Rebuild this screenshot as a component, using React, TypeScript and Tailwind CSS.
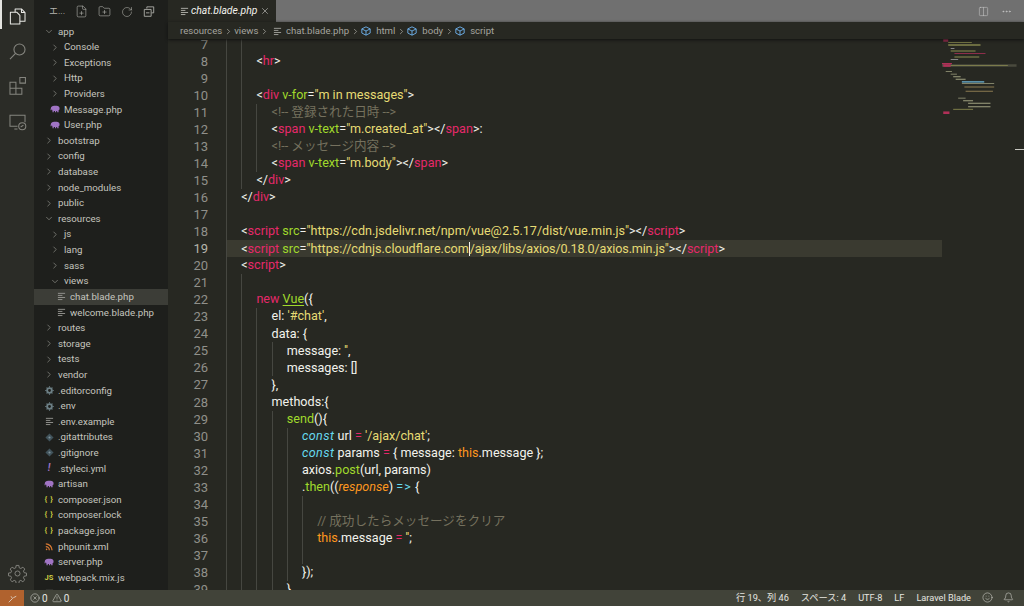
import { Bell, ChevronDown, ChevronRight, Columns2, Ellipsis, FilePlus, FolderPlus, RotateCw, Smile, TriangleAlert, X, CircleX } from "lucide-react";

const sans = "font-['Roboto','Noto_Sans_CJK_JP',sans-serif]";

type Kind = "t" | "p" | "a" | "s" | "n" | "c" | "k" | "o" | "g" | "i" | "u";
type Tok = [Kind, string];

const tokClass: Record<Kind, string> = {
  t: "text-[#f2f2ec]",
  p: "text-[#e5286a]",
  a: "text-[#a0d92c]",
  s: "text-[#e6db74]",
  n: "text-[#e6db74] tracking-[-0.15px]",
  c: "text-[#75715e]",
  k: "text-[#66d9ef] italic tracking-[0.4px]",
  o: "text-[#fd971f]",
  g: "text-[#fd971f] italic",
  i: "text-[#66d9ef] tracking-[1px]",
  u: "text-[#a0d92c] underline underline-offset-2",
};

const lines: { n: number; level: number; toks: Tok[] }[] = [
  { n: 7, level: 2, toks: [] },
  { n: 8, level: 2, toks: [["t", "<"], ["p", "hr"], ["t", ">"]] },
  { n: 9, level: 2, toks: [] },
  { n: 10, level: 2, toks: [["t", "<"], ["p", "div"], ["t", " "], ["a", "v-for"], ["t", "="], ["s", '"m in messages"'], ["t", ">"]] },
  { n: 11, level: 3, toks: [["c", "<!-- 登録された日時 -->"]] },
  { n: 12, level: 3, toks: [["t", "<"], ["p", "span"], ["t", " "], ["a", "v-text"], ["t", "="], ["s", '"m.created_at"'], ["t", "></"], ["p", "span"], ["t", ">:"]] },
  { n: 13, level: 3, toks: [["c", "<!-- メッセージ内容 -->"]] },
  { n: 14, level: 3, toks: [["t", "<"], ["p", "span"], ["t", " "], ["a", "v-text"], ["t", "="], ["s", '"m.body"'], ["t", "></"], ["p", "span"], ["t", ">"]] },
  { n: 15, level: 2, toks: [["t", "</"], ["p", "div"], ["t", ">"]] },
  { n: 16, level: 1, toks: [["t", "</"], ["p", "div"], ["t", ">"]] },
  { n: 17, level: 1, toks: [] },
  { n: 18, level: 1, toks: [["t", "<"], ["p", "script"], ["t", " "], ["a", "src"], ["t", "="], ["s", '"https://cdn.jsdelivr.net/npm/vue@2.5.17/dist/vue.min.js"'], ["t", "></"], ["p", "script"], ["t", ">"]] },
  { n: 19, level: 1, toks: [["t", "<"], ["p", "script"], ["t", " "], ["a", "src"], ["t", "="], ["s", '"https://cdnjs.cloudflare.com'], ["n", '/ajax/libs/axios/0.18.0/axios.min.js"'], ["t", "></"], ["p", "script"], ["t", ">"]] },
  { n: 20, level: 1, toks: [["t", "<"], ["p", "script"], ["t", ">"]] },
  { n: 21, level: 2, toks: [] },
  { n: 22, level: 2, toks: [["p", "new "], ["u", "Vue"], ["t", "({"]] },
  { n: 23, level: 3, toks: [["t", "el: "], ["s", "'#chat'"], ["t", ","]] },
  { n: 24, level: 3, toks: [["t", "data: {"]] },
  { n: 25, level: 4, toks: [["t", "message: "], ["s", "''"], ["t", ","]] },
  { n: 26, level: 4, toks: [["t", "messages: []"]] },
  { n: 27, level: 3, toks: [["t", "},"]] },
  { n: 28, level: 3, toks: [["t", "methods:{"]] },
  { n: 29, level: 4, toks: [["a", "send"], ["t", "(){"]] },
  { n: 30, level: 5, toks: [["k", "const"], ["t", " url "], ["p", "="], ["t", " "], ["s", "'/ajax/chat'"], ["t", ";"]] },
  { n: 31, level: 5, toks: [["k", "const"], ["t", " params "], ["p", "="], ["t", " { message: "], ["o", "this"], ["t", ".message };"]] },
  { n: 32, level: 5, toks: [["t", "axios."], ["a", "post"], ["t", "(url, params)"]] },
  { n: 33, level: 5, toks: [["t", "."], ["a", "then"], ["t", "(("], ["g", "response"], ["t", ") "], ["i", "=>"], ["t", " {"]] },
  { n: 34, level: 6, toks: [] },
  { n: 35, level: 6, toks: [["c", "// 成功したらメッセージをクリア"]] },
  { n: 36, level: 6, toks: [["o", "this"], ["t", ".message "], ["p", "="], ["t", " "], ["s", "''"], ["t", ";"]] },
  { n: 37, level: 6, toks: [] },
  { n: 38, level: 5, toks: [["t", "});"]] },
  { n: 39, level: 4, toks: [["t", "}"]] },
];

type Row = { name: string; depth: number; icon: "open" | "closed" | "php" | "gear" | "lines" | "git" | "yml" | "json" | "rss" | "js" | "none"; selected?: boolean };

const rows: Row[] = [
  { name: "app", depth: 0, icon: "open" },
  { name: "Console", depth: 1, icon: "closed" },
  { name: "Exceptions", depth: 1, icon: "closed" },
  { name: "Http", depth: 1, icon: "closed" },
  { name: "Providers", depth: 1, icon: "closed" },
  { name: "Message.php", depth: 1, icon: "php" },
  { name: "User.php", depth: 1, icon: "php" },
  { name: "bootstrap", depth: 0, icon: "closed" },
  { name: "config", depth: 0, icon: "closed" },
  { name: "database", depth: 0, icon: "closed" },
  { name: "node_modules", depth: 0, icon: "closed" },
  { name: "public", depth: 0, icon: "closed" },
  { name: "resources", depth: 0, icon: "open" },
  { name: "js", depth: 1, icon: "closed" },
  { name: "lang", depth: 1, icon: "closed" },
  { name: "sass", depth: 1, icon: "closed" },
  { name: "views", depth: 1, icon: "open" },
  { name: "chat.blade.php", depth: 2, icon: "lines", selected: true },
  { name: "welcome.blade.php", depth: 2, icon: "lines" },
  { name: "routes", depth: 0, icon: "closed" },
  { name: "storage", depth: 0, icon: "closed" },
  { name: "tests", depth: 0, icon: "closed" },
  { name: "vendor", depth: 0, icon: "closed" },
  { name: ".editorconfig", depth: 0, icon: "gear" },
  { name: ".env", depth: 0, icon: "gear" },
  { name: ".env.example", depth: 0, icon: "lines" },
  { name: ".gitattributes", depth: 0, icon: "git" },
  { name: ".gitignore", depth: 0, icon: "git" },
  { name: ".styleci.yml", depth: 0, icon: "yml" },
  { name: "artisan", depth: 0, icon: "php" },
  { name: "composer.json", depth: 0, icon: "json" },
  { name: "composer.lock", depth: 0, icon: "json" },
  { name: "package.json", depth: 0, icon: "json" },
  { name: "phpunit.xml", depth: 0, icon: "rss" },
  { name: "server.php", depth: 0, icon: "php" },
  { name: "webpack.mix.js", depth: 0, icon: "js" },
  { name: "yarn.lock", depth: 0, icon: "lines" },
];

function LinesIcon({ className = "" }: { className?: string }) {
  return (
    <svg viewBox="0 0 10 10" className={`w-[9px] h-[9px] ${className}`} fill="none" stroke="currentColor" strokeWidth="1">
      <path d="M1 1.5h8M1 3.8h5M1 6.1h8M1 8.4h5" />
    </svg>
  );
}

function PhpIcon() {
  return (
    <svg viewBox="0 0 12 9" className="w-[10px] h-[8px] text-[#a074c4]" fill="currentColor">
      <path d="M1 3.5C1 1.5 3 .5 5 .5h3c2 0 3.5 1.2 3.5 3.4 0 1.2-.5 2-1.2 2.2V8.5H8.6V6.8H7.4v1.7H6V6.8H4.5v1.7H3V6.5C2.6 6 2.4 5.4 2.4 4.4L1.6 6H.6z" />
    </svg>
  );
}

function GearIcon() {
  return (
    <svg viewBox="0 0 10 10" className="w-[9px] h-[9px] text-[#6d8086]" fill="none" stroke="currentColor">
      <circle cx="5" cy="5" r="2.6" strokeWidth="2" />
      <path d="M5 .3v1.4M5 8.3v1.4M.3 5h1.4M8.3 5h1.4M1.7 1.7l1 1M7.3 7.3l1 1M8.3 1.7l-1 1M2.7 7.3l-1 1" strokeWidth="1.2" />
    </svg>
  );
}

function RowIcon({ icon }: { icon: Row["icon"] }) {
  if (icon === "open") return <ChevronDown className="w-[11px] h-[11px] text-[#b0b0aa]" strokeWidth={1.3} />;
  if (icon === "closed") return <ChevronRight className="w-[11px] h-[11px] text-[#b0b0aa]" strokeWidth={1.3} />;
  if (icon === "php") return <PhpIcon />;
  if (icon === "gear") return <GearIcon />;
  if (icon === "lines") return <LinesIcon className="text-[#9a9a95]" />;
  if (icon === "git") return <svg viewBox="0 0 10 10" className="w-[9px] h-[9px]"><path d="M5 .5 9.5 5 5 9.5.5 5z" fill="#41535b" /><circle cx="5" cy="5" r="1.2" fill="#7f939b" /></svg>;
  if (icon === "yml") return <span className="text-[#a074c4] text-[10px] leading-none italic font-bold">!</span>;
  if (icon === "json") return <span className="text-[#cbcb41] text-[8px] leading-none font-bold tracking-[0.5px]">{"{ }"}</span>;
  if (icon === "rss") return <svg viewBox="0 0 10 10" className="w-[8px] h-[8px] text-[#d97a33]" fill="none" stroke="currentColor" strokeWidth="1.6"><path d="M1 1.2a7.8 7.8 0 0 1 7.8 7.8M1 4.6A4.4 4.4 0 0 1 5.4 9" /><circle cx="2" cy="8" r="1" fill="currentColor" stroke="none" /></svg>;
  if (icon === "js") return <span className="text-[#cbcb41] text-[7.5px] leading-none font-bold">JS</span>;
  return null;
}

function ActivityBar() {
  return (
    <aside className="w-[34px] shrink-0 bg-[#2b2c27] flex flex-col items-center relative">
      <span className="absolute left-0 top-0 h-[29px] w-[2px] bg-[#e4e4e0]" />
      <svg viewBox="0 0 24 24" className="w-[19px] h-[19px] mt-[7px] text-[#e8e8e4]" fill="none" stroke="currentColor" strokeWidth="1.3" strokeLinejoin="round">
        <path d="M9 6.5V2.5h8l4.5 4.5v11H15" />
        <path d="M17 2.5V7h4.5" />
        <path d="M3 6.5h8l4 4v11H3z" />
      </svg>
      <svg viewBox="0 0 24 24" className="w-[19px] h-[19px] mt-[16px] text-[#85857f]" fill="none" stroke="currentColor" strokeWidth="1.4">
        <circle cx="14.5" cy="9.5" r="7" />
        <path d="M9.5 14.5 2.5 21.5" />
      </svg>
      <svg viewBox="0 0 24 24" className="w-[19px] h-[19px] mt-[15px] text-[#85857f]" fill="none" stroke="currentColor" strokeWidth="1.3">
        <path d="M2.5 8h7.5v7.5H2.5zM2.5 15.5h7.5V23H2.5zM10 15.5h7.5V23H10zM15 2h7v7h-7z" />
      </svg>
      <svg viewBox="0 0 24 24" className="w-[19px] h-[19px] mt-[17px] text-[#85857f]" fill="none" stroke="currentColor" strokeWidth="1.3">
        <path d="M12 18H2.5V4h19v9" />
        <path d="M8 21.5h4" />
        <circle cx="18" cy="18" r="4.5" />
        <path d="m16 19 3.5-2.5" />
      </svg>
      <svg viewBox="0 0 24 24" className="w-[19px] h-[19px] mt-auto mb-[7px] text-[#85857f]" fill="none" stroke="currentColor" strokeWidth="1.2" strokeLinejoin="round">
        <circle cx="12" cy="12" r="3.2" />
        <path d="M10.3 1.8h3.4l.5 3 2 .9 2.6-1.7 2.4 2.4-1.7 2.6.9 2 3 .5v3.4l-3 .5-.9 2 1.7 2.6-2.4 2.4-2.6-1.7-2 .9-.5 3h-3.4l-.5-3-2-.9-2.6 1.7-2.4-2.4 1.7-2.6-.9-2-3-.5v-3.4l3-.5.9-2-1.7-2.6 2.4-2.4 2.6 1.7 2-.9z" />
      </svg>
    </aside>
  );
}

function Sidebar() {
  return (
    <aside className={`w-[134px] shrink-0 bg-[#1e1f1c] flex flex-col overflow-hidden ${sans}`}>
      <div className="h-[23.6px] shrink-0 flex items-center text-[#b5b5af]">
        <span className="ml-[15px] text-[9px] w-[24px]">エ...</span>
        <div className="flex items-center gap-[10px] ml-[2px]">
          <FilePlus className="w-[13px] h-[13px]" strokeWidth={1.1} />
          <FolderPlus className="w-[13px] h-[13px]" strokeWidth={1.1} />
          <RotateCw className="w-[12px] h-[12px]" strokeWidth={1.1} />
          <svg viewBox="0 0 14 14" className="w-[12px] h-[12px]" fill="none" stroke="currentColor" strokeWidth="1"><path d="M4.5 3V1h8v7h-2.5M1.5 4h8v8h-8zM3.5 8h4" /></svg>
        </div>
      </div>
      {rows.map((r) => (
        <div
          key={r.name}
          className={`h-[15.62px] shrink-0 flex items-center text-[9.7px] leading-none text-[#c5c5bf] ${r.selected ? "bg-[#3c3d37]" : ""}`}
        >
          <span className={`w-[10px] flex justify-center shrink-0 ${r.depth === 0 ? "ml-[10px]" : r.depth === 1 ? "ml-[16px]" : "ml-[22px]"}`}>
            <RowIcon icon={r.icon} />
          </span>
          <span className="ml-[4px] whitespace-nowrap">{r.name}</span>
        </div>
      ))}
    </aside>
  );
}

function Crumb({ children, cube }: { children: string; cube?: boolean }) {
  return (
    <span className="flex items-center gap-[5px]">
      {cube && (
        <svg viewBox="0 0 12 12" className="w-[10px] h-[10px] text-[#75beff]" fill="none" stroke="currentColor" strokeWidth="1"><path d="M6 1 11 3.5v5L6 11 1 8.5v-5zM1 3.5 6 6l5-2.5M6 6v5" /></svg>
      )}
      {children}
    </span>
  );
}

function Minimap() {
  return (
    <svg viewBox="17 2 66 105" preserveAspectRatio="none" className="w-[82px] h-[90px] absolute right-0 top-0 blur-[0.4px]">
      <g strokeWidth="1">
        <path d="M18 3.5h4" stroke="#b03058" strokeWidth="3" />
        <path d="M22 6h5M27 6h14" stroke="#8c8c50" />
        <path d="M22 9h4M26 9h12M38 9h10" stroke="#b0b060" />
        <path d="M24 13h3" stroke="#999" />
        <path d="M24 16h12M36 16h8" stroke="#8c8c50" />
        <path d="M27 19h5M32 19h14M46 19h6" stroke="#b03058" />
        <path d="M27 23h12M39 23h8" stroke="#8c8c50" />
        <path d="M24 26h6" stroke="#999" />
        <path d="M17 31h8" stroke="#b03058" strokeWidth="2" />
        <path d="M17 33h60" stroke="#4a4a3e" strokeWidth="3" />
        <path d="M18 33h6" stroke="#b03058" strokeWidth="3" />
        <path d="M24 33h46" stroke="#8c8c50" />
        <path d="M20 40h5M24 43h5M26 46h6M28 49h8M33 54h6M37 54h22" stroke="#a0a080" />
        <path d="M33 52h18" stroke="#5a90a8" strokeWidth="2" />
        <path d="M35 58h10M45 58h14M36 63h22" stroke="#8c7a50" />
        <path d="M30 71h6M34 74h8M38 77h18M38 81h18" stroke="#a0a080" />
        <path d="M26 84h16" stroke="#8c8c50" />
        <path d="M18 88h5" stroke="#b03058" strokeWidth="3" />
      </g>
    </svg>
  );
}

function CodeLine({ line }: { line: (typeof lines)[number] }) {
  const active = line.n === 19;
  return (
    <div className="h-[17.06px] flex items-center shrink-0">
      <span className={`w-[40px] shrink-0 text-right text-[13px] leading-none ${active ? "text-[#b5b5ac]" : "text-[#90908a]"}`}>{line.n}</span>
      <div className={`ml-[18px] w-[716px] h-full flex items-center whitespace-pre text-[12.6px] leading-none ${active ? "bg-[#3a3a30]" : ""}`}>
        {Array.from({ length: line.level }, (_, i) => (
          <span key={i} className="w-[15.2px] h-full shrink-0 border-l border-[#464741]" />
        ))}
        <span className="relative">
          {line.toks.map(([kind, text], i) => (
            <span key={i} className={tokClass[kind]}>
              {active && i === 6 && <span className="inline-block w-0 h-[14px] align-[-3px] border-l border-[#f2f2ec]" />}
              {text}
            </span>
          ))}
        </span>
      </div>
    </div>
  );
}

export default function App() {
  return (
    <div className={`w-[1024px] h-[606px] flex flex-col overflow-hidden bg-[#272822] ${sans}`}>
      <div className="flex flex-1 min-h-0">
        <ActivityBar />
        <Sidebar />
        <main className="flex-1 min-w-0 flex flex-col">
          <div className="h-[22px] shrink-0 flex bg-[#707070]">
            <div className="w-[108px] bg-[#272822] flex items-center text-[#f2f2ec] text-[10.4px] italic">
              <LinesIcon className="ml-[12px] text-[#b5b5af]" />
              <span className="ml-[2px]">chat.blade.php</span>
              <X className="w-[10px] h-[10px] ml-[3px] text-[#d0d0cc]" strokeWidth={1.4} />
            </div>
            <div className="ml-auto flex items-center text-[#c8c8c8] gap-[12px] pr-[12px]">
              <Columns2 className="w-[11px] h-[11px]" strokeWidth={1.2} />
              <Ellipsis className="w-[11px] h-[11px]" strokeWidth={1.6} />
            </div>
          </div>
          <div className="h-[17px] pt-[1px] shrink-0 flex items-center gap-[1.5px] pl-[12px] bg-[#272822] text-[9.6px] text-[#a5a59f] shadow-[0_1px_3px_#111] relative z-10">
            <Crumb>resources</Crumb>
            <ChevronRight className="w-[9px] h-[9px]" />
            <Crumb>views</Crumb>
            <ChevronRight className="w-[9px] h-[9px]" />
            <LinesIcon className="text-[#a5a59f] w-[8px] h-[8px] ml-[3px] mr-[2px]" />
            <Crumb>chat.blade.php</Crumb>
            <ChevronRight className="w-[9px] h-[9px]" />
            <Crumb cube>html</Crumb>
            <ChevronRight className="w-[9px] h-[9px]" />
            <Crumb cube>body</Crumb>
            <ChevronRight className="w-[9px] h-[9px]" />
            <Crumb cube>script</Crumb>
          </div>
          <div className="flex-1 min-h-0 overflow-hidden relative">
            <Minimap />
            <span className="absolute right-0 top-[110px] w-[9px] h-[1px] bg-[#c8c8c2]" />
            <div className="-mt-[3.5px] flex flex-col">
              {lines.map((l) => (
                <CodeLine key={l.n} line={l} />
              ))}
            </div>
          </div>
        </main>
      </div>
      <footer className="h-[16px] shrink-0 bg-[#414339] flex items-center text-[9.2px] text-[#e6e6e0]">
        <span className="w-[24px] h-full bg-[#b0622e] flex items-center justify-center">
          <svg viewBox="0 0 12 12" className="w-[9px] h-[9px]" fill="none" stroke="currentColor" strokeWidth="1"><path d="m1 11 5-5M6 6 4 3M7 5l4-2" /></svg>
        </span>
        <span className="ml-[6px] flex items-center gap-[2px] text-[10px]">
          <CircleX className="w-[10px] h-[10px]" strokeWidth={1.2} />0
          <TriangleAlert className="w-[10px] h-[10px] ml-[2px]" strokeWidth={1.2} />0
        </span>
        <div className="ml-auto flex items-center">
          <span>行 19、列 46</span>
          <span className="ml-[12px]">スペース: 4</span>
          <span className="ml-[12px]">UTF-8</span>
          <span className="ml-[12px]">LF</span>
          <span className="ml-[12px]">Laravel Blade</span>
          <Smile className="w-[11px] h-[11px] ml-[11px]" strokeWidth={1.1} />
          <Bell className="w-[11px] h-[11px] ml-[10px] mr-[10px]" strokeWidth={1.1} />
        </div>
      </footer>
    </div>
  );
}
